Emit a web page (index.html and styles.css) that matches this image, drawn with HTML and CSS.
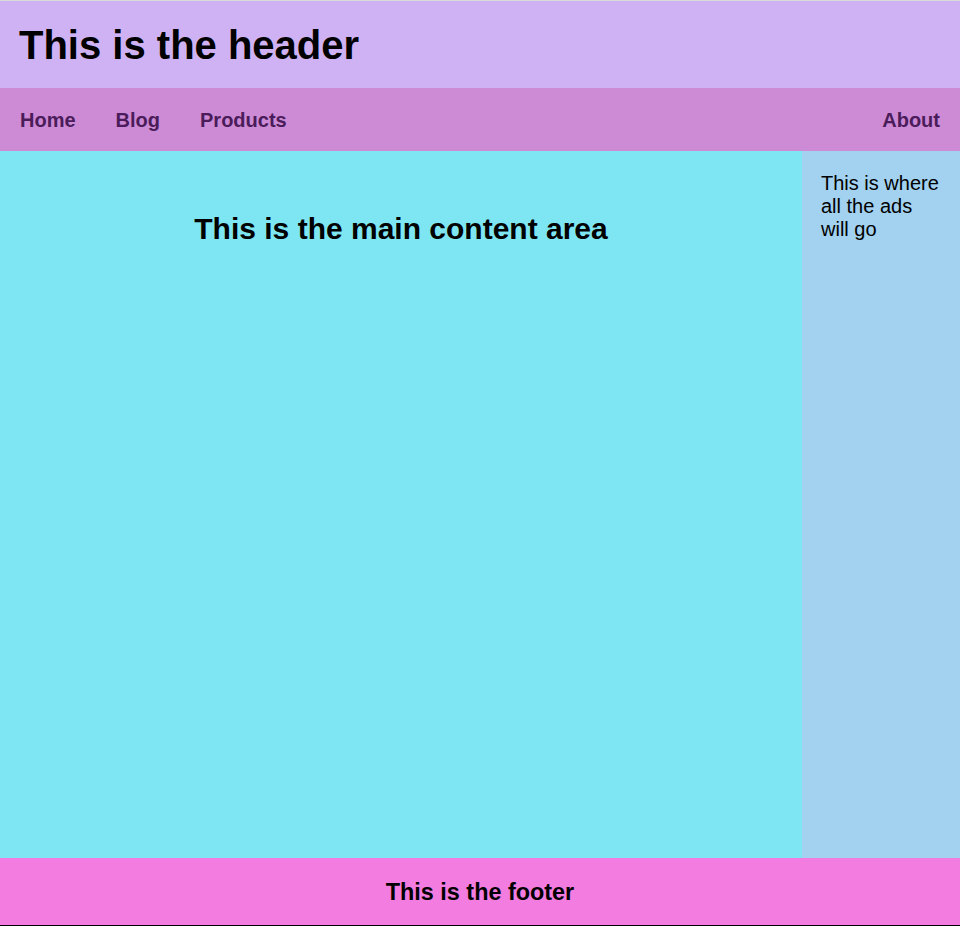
FILE: index.html
```html
<!DOCTYPE html>
<html lang="en">
<head>
<meta charset="utf-8">
<title>Layout</title>
<link rel="stylesheet" href="styles.css">
</head>
<body>
<div class="page">
  <header class="site-header">
    <h1 class="site-title">This is the header</h1>
  </header>
  <nav class="site-nav">
    <ul class="nav-list">
      <li class="nav-item"><a class="nav-link" href="#">Home</a></li>
      <li class="nav-item"><a class="nav-link" href="#">Blog</a></li>
      <li class="nav-item"><a class="nav-link" href="#">Products</a></li>
      <li class="nav-item nav-item-right"><a class="nav-link" href="#">About</a></li>
    </ul>
  </nav>
  <div class="content">
    <main class="main">
      <h2 class="main-title">This is the main content area</h2>
    </main>
    <aside class="ads">
      <p class="ads-text">This is where all the ads will go</p>
    </aside>
  </div>
  <footer class="site-footer">
    <h3 class="footer-title">This is the footer</h3>
  </footer>
</div>
</body>
</html>
```
FILE: styles.css
```css
html, body {
  margin: 0;
  padding: 0;
}
body {
  font-family: "Liberation Sans", Arial, sans-serif;
  font-size: 20px;
  color: #000;
}
.page {
  box-sizing: border-box;
  height: 100vh;
  display: grid;
  grid-template-rows: auto auto 1fr auto;
  border-top: 1px solid #d9d9d9;
  border-bottom: 1px solid #000;
}
.site-header {
  background: #cfb2f3;
  padding: 21px 19px 20px;
}
.site-title {
  margin: 0;
  font-size: 40px;
  line-height: 46px;
}
.site-nav {
  background: #cd8bd6;
}
.nav-list {
  list-style: none;
  margin: 0;
  padding: 0;
  display: flex;
}
.nav-item-right {
  margin-left: auto;
}
.nav-link {
  display: block;
  padding: 21px 20px 19px;
  line-height: 23px;
  font-weight: bold;
  color: #4b1c5a;
  text-decoration: none;
}
.content {
  display: grid;
  grid-template-columns: 1fr 158px;
}
.main {
  background: #7ee6f2;
  padding: 21px 20px 20px;
  text-align: center;
}
.main-title {
  margin: 40px 0 0;
  font-size: 30px;
  line-height: 34px;
}
.ads {
  background: #a2d2f0;
  padding: 21px 19px 20px;
}
.ads-text {
  margin: 0;
  line-height: 23px;
}
.site-footer {
  background: #f27cdf;
  padding: 21px 20px 19px;
  text-align: center;
}
.footer-title {
  margin: 0;
  font-size: 23.4px;
  line-height: 27px;
}
```
